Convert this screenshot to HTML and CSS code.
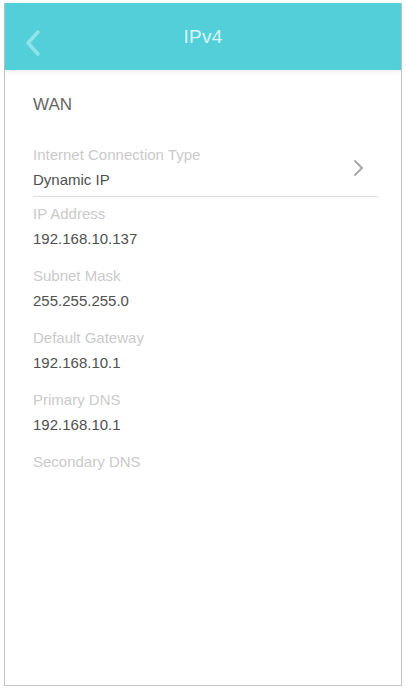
FILE: index.html
```html
<!DOCTYPE html>
<html>
<head>
<meta charset="utf-8">
<link rel="stylesheet" href="styles.css">
</head>
<body>
<div class="frame">
  <header class="topbar">
    <svg class="back" width="18" height="28" viewBox="0 0 18 28"><polyline points="14,3 4,14 14,25" fill="none" stroke="#8fe3ea" stroke-width="3.5" stroke-linecap="round" stroke-linejoin="round"/></svg>
    <div class="title">IPv4</div>
  </header>
  <main class="content">
    <div class="section">WAN</div>
    <div class="select-row">
      <div class="field">
        <div class="label">Internet Connection Type</div>
        <div class="value">Dynamic IP</div>
      </div>
      <svg class="chev" width="12" height="18" viewBox="0 0 12 18"><polyline points="3,2 10,9 3,16" fill="none" stroke="#a8a8a8" stroke-width="2" stroke-linecap="round" stroke-linejoin="round"/></svg>
    </div>
    <div class="list">
      <div class="field">
        <div class="label">IP Address</div>
        <div class="value">192.168.10.137</div>
      </div>
      <div class="field">
        <div class="label">Subnet Mask</div>
        <div class="value">255.255.255.0</div>
      </div>
      <div class="field">
        <div class="label">Default Gateway</div>
        <div class="value">192.168.10.1</div>
      </div>
      <div class="field">
        <div class="label">Primary DNS</div>
        <div class="value">192.168.10.1</div>
      </div>
      <div class="field">
        <div class="label">Secondary DNS</div>
      </div>
    </div>
  </main>
</div>
</body>
</html>
```

FILE: styles.css
```css
html, body {
  margin: 0;
  padding: 0;
  background: #ffffff;
}
body {
  font-family: "Liberation Sans", Arial, sans-serif;
}
.frame {
  margin: 3px 0 0 4px;
  width: 396px;
  height: 682px;
  border: 1px solid #c4c4c4;
  border-top: none;
  display: flex;
  flex-direction: column;
  background: #fff;
}
.topbar {
  height: 67px;
  background: #53cfd9;
  display: flex;
  align-items: center;
  justify-content: center;
  position: relative;
  box-shadow: 0 2px 5px rgba(0, 0, 0, 0.07);
}
.back {
  position: absolute;
  left: 19px;
  top: 26px;
}
.title {
  color: #d9f6f8;
  font-size: 19px;
  letter-spacing: 0.3px;
}
.content {
  padding: 0 23px 0 28px;
  display: flex;
  flex-direction: column;
}
.section {
  margin-top: 24px;
  font-size: 17px;
  line-height: 21px;
  color: #666;
}
.select-row {
  margin-top: 30px;
  display: flex;
  align-items: center;
  justify-content: space-between;
  padding-bottom: 6px;
  border-bottom: 1.5px solid #dedede;
}
.chev {
  margin-right: 14px;
}
.field {
  display: flex;
  flex-direction: column;
  gap: 5px;
}
.label {
  font-size: 15px;
  line-height: 20px;
  color: #cacaca;
}
.value {
  font-size: 15px;
  line-height: 20px;
  color: #505050;
}
.list {
  margin-top: 7px;
  display: flex;
  flex-direction: column;
  gap: 17px;
}
```
